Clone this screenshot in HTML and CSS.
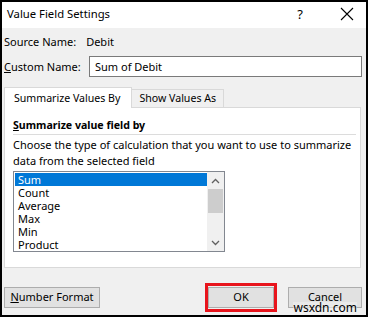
FILE: index.html
```html
<!DOCTYPE html>
<html lang="en">
<head>
    <meta charset="UTF-8">
    <title>Value Field Settings</title>
    <link rel="stylesheet" href="styles.css">
</head>
<body>

<div class="dialog">
    <div class="titlebar">
        <span class="title">Value Field Settings</span>
        <span class="title-btn help">?</span>
        <span class="title-btn close">
            <svg width="14" height="14" viewBox="0 0 14 14"><path d="M1 1 L13 13 M13 1 L1 13" stroke="#000" stroke-width="1.1" fill="none"/></svg>
        </span>
    </div>

    <div class="content">
        <div class="field-row source">
            <span class="label">Source Name:</span>
            <span class="value">Debit</span>
        </div>
        <div class="field-row custom">
            <label class="label" for="customName"><u>C</u>ustom Name:</label>
            <input type="text" id="customName" class="name-input" value="Sum of Debit">
        </div>

        <div class="tabs">
            <div class="tab active">Summarize Values By</div>
            <div class="tab">Show Values As</div>
        </div>
        <div class="tab-panel">
            <div class="group-title"><u>S</u>ummarize value field by</div>
            <p class="hint">Choose the type of calculation that you want to use to summarize<br>data from the selected field</p>
            <div class="listbox">
                <ul class="items">
                    <li class="selected">Sum</li>
                    <li>Count</li>
                    <li>Average</li>
                    <li>Max</li>
                    <li>Min</li>
                    <li>Product</li>
                </ul>
                <div class="scrollbar">
                    <div class="arrow">
                        <svg width="9" height="6" viewBox="0 0 9 6"><path d="M1 5 L4.5 1.5 L8 5" stroke="#606060" stroke-width="1.3" fill="none"/></svg>
                    </div>
                    <div class="track"><div class="thumb"></div></div>
                    <div class="arrow">
                        <svg width="9" height="6" viewBox="0 0 9 6"><path d="M1 1 L4.5 4.5 L8 1" stroke="#606060" stroke-width="1.3" fill="none"/></svg>
                    </div>
                </div>
            </div>
        </div>

        <div class="footer">
            <button class="btn number"><u>N</u>umber Format</button>
            <div class="footer-right">
                <div class="highlight"><button class="btn ok">OK</button></div>
                <button class="btn cancel">Cancel</button>
            </div>
        </div>
    </div>
    <span class="watermark">wsxdn.com</span>
</div>

</body>
</html>
```

FILE: styles.css
```css
* {
    box-sizing: border-box;
}
body {
    margin: 0;
    font-family: "Segoe UI", "Noto Sans", sans-serif;
    font-size: 11px;
    color: #000;
    background: #000;
}
.dialog {
    position: relative;
    width: 368px;
    height: 317px;
    border: 2px solid #000;
    background: #f0f0f0;
    display: flex;
    flex-direction: column;
}
.titlebar {
    height: 26px;
    background: #fff;
    display: flex;
    align-items: center;
    padding-left: 5px;
    padding-bottom: 3px;
}
.title {
    flex: 1;
    font-size: 11.3px;
}
.title-btn {
    display: flex;
    align-items: center;
    justify-content: center;
}
.help {
    width: 16px;
    margin-right: 32px;
    font-size: 13px;
}
.close {
    width: 14px;
    margin-right: 12px;
}
.content {
    flex: 1;
    padding: 0 4px 0 2px;
    display: flex;
    flex-direction: column;
}
.field-row {
    display: flex;
    align-items: center;
}
.source {
    height: 26px;
}
.source .value {
    margin-left: 10px;
}
.custom {
    height: 23px;
    padding-top: 2px;
}
.custom .label {
    width: 85px;
}
.name-input {
    flex: 1;
    height: 21px;
    border: 1px solid #7a7a7a;
    padding: 0 5px 1px;
    font-family: inherit;
    font-size: 11px;
    background: #fff;
    outline: none;
}
.tabs {
    display: flex;
    align-items: flex-end;
    margin-top: 9px;
    height: 21px;
    font-size: 10.6px;
}
.tab {
    height: 18px;
    padding: 0 7px 1px;
    border: 1px solid #d9d9d9;
    border-bottom: none;
    border-left: none;
    display: flex;
    align-items: center;
    background: #f0f0f0;
}
.tab.active {
    height: 21px;
    border-left: 1px solid #d9d9d9;
    background: #fff;
    padding: 0 11px 1px 9px;
    margin-bottom: -1px;
    position: relative;
}
.tab-panel {
    height: 161px;
    margin-right: 1px;
    background: #fff;
    border: 1px solid #d9d9d9;
    padding: 8px 4px 0 8px;
}
.group-title {
    font-weight: bold;
    font-size: 10.6px;
    height: 19px;
    padding-top: 2px;
    margin-bottom: 2px;
    border-bottom: 1px solid #dcdcdc;
}
.hint {
    margin: 2px 0 0;
    line-height: 16px;
    white-space: nowrap;
}
.listbox {
    display: flex;
    width: 212px;
    height: 81px;
    margin-top: 2px;
    border: 1px solid #828790;
}
.items {
    flex: 1;
    list-style: none;
    margin: 0;
    padding: 1px 0 0 1px;
}
.items li {
    height: 13px;
    line-height: 13px;
    padding-left: 3px;
}
.items li.selected {
    background: #0078d7;
    color: #fff;
}
.scrollbar {
    width: 17px;
    background: #f0f0f0;
    display: flex;
    flex-direction: column;
}
.arrow {
    height: 17px;
    display: flex;
    align-items: center;
    justify-content: center;
}
.track {
    flex: 1;
    padding: 0 1px;
}
.thumb {
    height: 24px;
    background: #cdcdcd;
}
.footer {
    display: flex;
    justify-content: space-between;
    align-items: center;
    margin-top: 15px;
}
.footer-right {
    display: flex;
    align-items: center;
}
.btn {
    height: 21px;
    border: 1px solid #adadad;
    background: #e1e1e1;
    font-family: inherit;
    font-size: 11px;
    color: #000;
    padding: 0 0 2px;
}
.number {
    width: 96px;
}
.highlight {
    border: 3px solid #e8141c;
    padding: 1px 0;
    margin-right: 11px;
}
.ok {
    width: 66px;
    display: block;
}
.cancel {
    width: 74px;
}
.watermark {
    position: absolute;
    right: 9px;
    bottom: 1px;
    font-size: 12px;
    line-height: 12px;
    color: #000;
    background: rgba(240, 240, 240, 0.6);
}
```
